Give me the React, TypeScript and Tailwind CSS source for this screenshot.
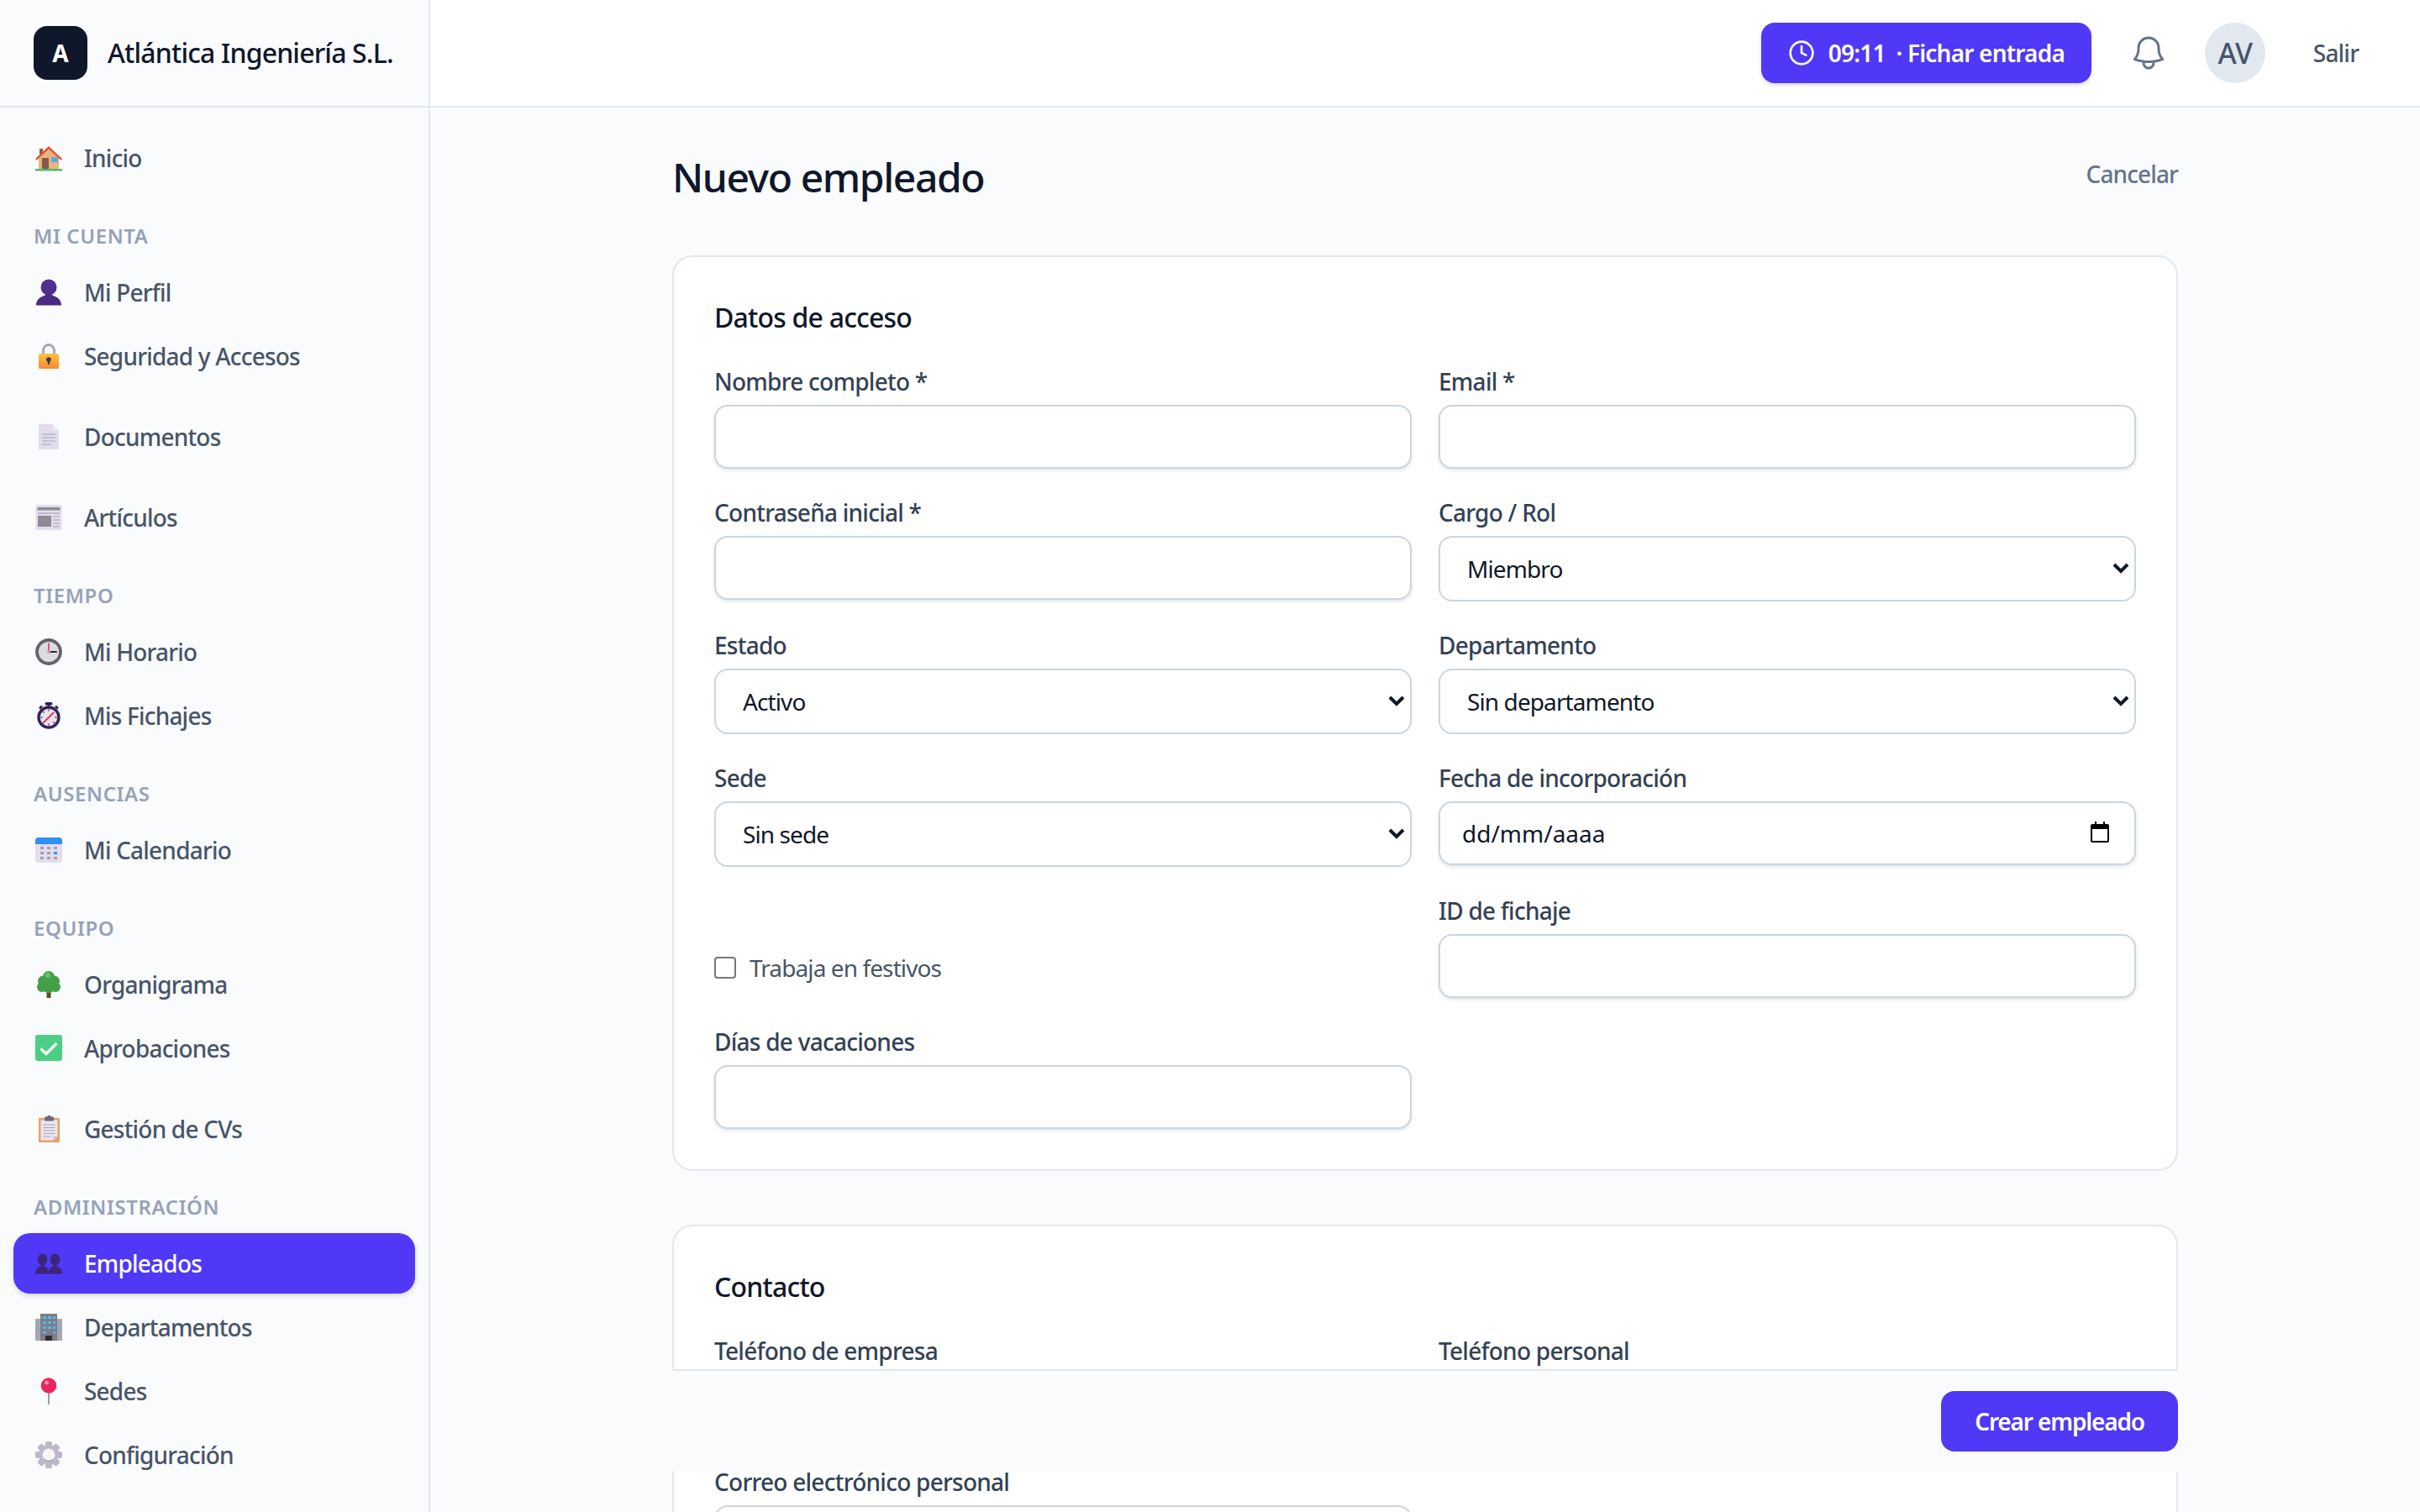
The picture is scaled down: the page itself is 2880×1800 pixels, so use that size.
import { ReactNode } from 'react';
import { Clock } from 'lucide-react';

function HomeIcon() {
  return (
    <svg viewBox="0 0 32 32" className="h-[32px] w-[32px]">
      <rect x="5" y="5" width="4" height="8" fill="#b4533a" />
      <path d="M4 15 16 4l12 11v14H4z" fill="#e9b47d" />
      <path d="M0 17 16 2l16 15-1.600 1.800L16 5.400 1.600 18.800z" fill="#e2553a" />
      <rect x="8" y="16" width="8" height="13" rx="1" fill="#85594a" />
      <rect x="19" y="15" width="8" height="6" rx="1" fill="#5aa9e6" />
      <rect x="0" y="29" width="32" height="2.500" fill="#52b96b" />
    </svg>
  );
}

function BustIcon() {
  return (
    <svg viewBox="0 0 32 32" className="h-[32px] w-[32px]">
      <ellipse cx="16" cy="10" rx="9.500" ry="9.500" fill="#4f2f8f" />
      <path d="M1 31.500c0-7 5-10 9.500-11.500l5.500-3 5.500 3c4.500 1.500 9.500 4.500 9.500 11.500z" fill="#4a2a86" />
    </svg>
  );
}

function BustsIcon() {
  return (
    <svg viewBox="0 0 32 32" className="h-[32px] w-[32px]">
      <g fill="#3d2478">
        <ellipse cx="8.500" cy="11.500" rx="5.800" ry="7" />
        <path d="M0 28.500c0-5 2.500-7.500 5-8.500l3.500-2 3.500 2c2.500 1 4 3.500 4 8.500z" />
        <ellipse cx="23.500" cy="11.500" rx="5.800" ry="7" />
        <path d="M16 28.500c0-5 1.500-7.500 4-8.500l3.500-2 3.500 2c2.500 1 5 3.500 5 8.500z" />
      </g>
    </svg>
  );
}

function LockIcon() {
  return (
    <svg viewBox="0 0 32 32" className="h-[32px] w-[32px]">
      <defs>
        <linearGradient id="lockBody" x1="0" y1="0" x2="0" y2="1">
          <stop offset="0" stopColor="#fcc23b" />
          <stop offset="1" stopColor="#f78a34" />
        </linearGradient>
      </defs>
      <path d="M9.500 15V9a6.500 6.500 0 0 1 13 0v6" fill="none" stroke="#a9a4b0" strokeWidth="2.800" />
      <rect x="4" y="13" width="24" height="18" rx="1.500" fill="url(#lockBody)" />
      <circle cx="16" cy="20" r="2.800" fill="#3f3347" />
      <rect x="14.800" y="21" width="2.400" height="5" rx="1" fill="#3f3347" />
    </svg>
  );
}

function DocumentIcon() {
  return (
    <svg viewBox="0 0 32 32" className="h-[32px] w-[32px]">
      <path d="M4 1h17l7 7v23H4z" fill="#e3dcef" />
      <path d="M21 1l7 7h-7z" fill="#f2eef8" />
      <path d="M8 13h16M8 17h16M8 21h16M8 25h11" stroke="#a9a2b6" strokeWidth="1.200" />
    </svg>
  );
}

function NewsIcon() {
  return (
    <svg viewBox="0 0 32 32" className="h-[32px] w-[32px]">
      <rect x="0.500" y="1" width="31" height="30" rx="1.500" fill="#e3dcef" />
      <rect x="2.500" y="4" width="27" height="3.500" fill="#8f8a96" />
      <path d="M3 11h26" stroke="#a9a2b6" strokeWidth="1.200" />
      <rect x="3" y="14" width="16" height="13" fill="#8f8a96" />
      <path d="M21 15h8M21 19h8M21 23h8M21 27h8" stroke="#a9a2b6" strokeWidth="1.200" />
    </svg>
  );
}

function ClockEmoji() {
  return (
    <svg viewBox="0 0 32 32" className="h-[32px] w-[32px]">
      <circle cx="16" cy="16" r="14" fill="#dfdbe3" stroke="#66636b" strokeWidth="3.800" />
      <path d="M16 16V6" stroke="#e8335b" strokeWidth="1.600" strokeLinecap="round" />
      <path d="M16 16h9" stroke="#2f2b33" strokeWidth="2.200" strokeLinecap="round" />
      <circle cx="16" cy="16" r="2" fill="#a9a4b0" />
    </svg>
  );
}

function StopwatchIcon() {
  return (
    <svg viewBox="0 0 32 32" className="h-[32px] w-[32px]">
      <rect x="11.500" y="0" width="9" height="3.500" rx="1.700" fill="#2e2150" />
      <rect x="14.500" y="3" width="3" height="3" fill="#2e2150" />
      <path d="M24 4.500l3 3" stroke="#2e2150" strokeWidth="2.500" />
      <path d="M8 4.500l-3 3" stroke="#2e2150" strokeWidth="2.500" />
      <circle cx="16" cy="18" r="12" fill="#e6e2ea" stroke="#33245a" strokeWidth="3.400" />
      <path d="M11 23 21.500 12.500" stroke="#e8335b" strokeWidth="2" strokeLinecap="round" />
      <path d="M16 8.500v2M16 25.500v2M6.500 18h2M23.500 18h2M9 11l1.500 1.500M9 25l1.500-1.500M23 25l-1.500-1.500" stroke="#4b4458" strokeWidth="1.500" />
    </svg>
  );
}

function CalendarIcon() {
  return (
    <svg viewBox="0 0 32 32" className="h-[32px] w-[32px]">
      <rect x="0" y="1" width="32" height="30" rx="4" fill="#e3dcef" />
      <path d="M0 9V5a4 4 0 0 1 4-4h24a4 4 0 0 1 4 4v4z" fill="#2f8ff2" />
      <g fill="#a49db4">
        <rect x="6" y="12" width="4" height="3" />
        <rect x="14" y="12" width="4" height="3" />
        <rect x="22" y="12" width="4" height="3" />
        <rect x="6" y="18" width="4" height="3" />
        <rect x="14" y="18" width="4" height="3" />
        <rect x="6" y="24" width="4" height="3" />
        <rect x="14" y="24" width="4" height="3" />
        <rect x="22" y="24" width="4" height="3" />
      </g>
      <rect x="22" y="18" width="4" height="3" fill="#2f8ff2" />
    </svg>
  );
}

function TreeIcon() {
  return (
    <svg viewBox="0 0 32 32" className="h-[32px] w-[32px]">
      <rect x="13.500" y="22" width="5" height="10" fill="#6d4534" />
      <g fill="#43a047">
        <circle cx="16" cy="7" r="7" />
        <circle cx="9.500" cy="12" r="6.500" />
        <circle cx="22.500" cy="12" r="6.500" />
        <circle cx="8" cy="19" r="6" />
        <circle cx="24" cy="19" r="6" />
        <circle cx="16" cy="18" r="8" />
      </g>
      <circle cx="15" cy="5" r="3.500" fill="#66bb6a" />
    </svg>
  );
}

function CheckIcon() {
  return (
    <svg viewBox="0 0 32 32" className="h-[32px] w-[32px]">
      <rect x="0" y="0" width="32" height="31" rx="3" fill="#4ccf84" />
      <path d="M6.500 16.500 13 22.500 25.500 10" fill="none" stroke="#fff" strokeWidth="3.200" />
    </svg>
  );
}

function ClipboardIcon() {
  return (
    <svg viewBox="0 0 32 32" className="h-[32px] w-[32px]">
      <rect x="4" y="3" width="25" height="29" rx="1" fill="#e6a266" />
      <path d="M6.500 5.500h20v19l-5 5h-15z" fill="#eae5f2" />
      <path d="M21.500 29.500v-5h5z" fill="#cfc8dc" />
      <rect x="11" y="1.500" width="11" height="5" rx="1" fill="#6d6a78" />
      <rect x="14" y="0" width="5" height="3" rx="1.500" fill="#6d6a78" />
      <path d="M9.500 11h14M9.500 14.500h14M9.500 18h14M9.500 21.500h14M9.500 25h9" stroke="#aaa3b8" strokeWidth="1.200" />
    </svg>
  );
}

function OfficeIcon() {
  return (
    <svg viewBox="0 0 32 32" className="h-[32px] w-[32px]">
      <rect x="0" y="6" width="32" height="26" fill="#a9a6ae" />
      <rect x="6" y="0" width="20" height="32" fill="#7f7c86" />
      <g fill="#4fb8ee">
        <rect x="9" y="3" width="4" height="3" />
        <rect x="15" y="3" width="4" height="3" />
        <rect x="21" y="3" width="3" height="3" />
        <rect x="9" y="9" width="4" height="3" />
        <rect x="15" y="9" width="4" height="3" />
        <rect x="21" y="9" width="3" height="3" />
        <rect x="9" y="15" width="4" height="3" />
        <rect x="15" y="15" width="4" height="3" />
        <rect x="21" y="15" width="3" height="3" />
        <rect x="9" y="21" width="4" height="3" />
        <rect x="21" y="21" width="3" height="3" />
        <rect x="2" y="10" width="2" height="3" />
        <rect x="2" y="16" width="2" height="3" />
        <rect x="28" y="10" width="2" height="3" />
        <rect x="28" y="16" width="2" height="3" />
      </g>
      <rect x="12" y="26" width="8" height="6" fill="#2f2b33" />
    </svg>
  );
}

function PinIcon() {
  return (
    <svg viewBox="0 0 32 32" className="h-[32px] w-[32px]">
      <rect x="15" y="16" width="2" height="16" fill="#a09ca6" />
      <circle cx="16" cy="9.500" r="9.300" fill="#e9265f" />
      <circle cx="13.500" cy="6" r="2.500" fill="#f98aa9" />
    </svg>
  );
}

function GearIcon() {
  return (
    <svg viewBox="0 0 32 32" className="h-[32px] w-[32px]">
      <g fill="#bdb7c9">
        <circle cx="16" cy="16" r="11.500" />
        <rect x="12" y="0" width="8" height="32" rx="2.500" />
        <rect x="12" y="0" width="8" height="32" rx="2.500" transform="rotate(45 16 16)" />
        <rect x="12" y="0" width="8" height="32" rx="2.500" transform="rotate(90 16 16)" />
        <rect x="12" y="0" width="8" height="32" rx="2.500" transform="rotate(135 16 16)" />
      </g>
      <circle cx="16" cy="16" r="7.500" fill="#f8f6fb" />
      <path d="M9.500 20a7.500 7.500 0 0 0 13 0 9 9 0 0 1-13 0z" fill="#8f8a96" />
    </svg>
  );
}

function BellIcon() {
  return (
    <svg viewBox="0 0 24 24" fill="none" stroke="currentColor" strokeWidth="1.500" className="h-[48px] w-[48px] text-[#64748b]">
      <path
        strokeLinecap="round"
        strokeLinejoin="round"
        d="M14.857 17.082a23.848 23.848 0 0 0 5.454-1.31A8.967 8.967 0 0 1 18 9.750V9A6 6 0 0 0 6 9v.750a8.967 8.967 0 0 1-2.312 6.022c1.733.64 3.560 1.085 5.455 1.310m5.714 0a24.255 24.255 0 0 1-5.714 0m5.714 0a3 3 0 1 1-5.714 0"
      />
    </svg>
  );
}

function NavItem({ icon, label, active = false }: { icon: ReactNode; label: string; active?: boolean }) {
  return (
    <a
      className={
        active
          ? 'flex h-[72px] items-center gap-[24px] rounded-[20px] bg-[#4f39f6] px-[24px] text-[28px] font-medium tracking-[-0.8px] text-white shadow-[0_2px_6px_rgba(15,23,42,0.18)]'
          : 'flex h-[72px] items-center gap-[24px] rounded-[20px] px-[24px] text-[28px] font-medium tracking-[-0.8px] text-[#475569]'
      }
    >
      <span className="flex w-[36px] justify-center">{icon}</span>
      {label}
    </a>
  );
}

function NavGroup({ title, children }: { title?: string; children: ReactNode }) {
  return (
    <div className="flex flex-col gap-[4px]">
      {title && (
        <div className="mb-[11px] flex h-[49px] items-end px-[24px] text-[24px] leading-[32px] font-semibold tracking-[0.6px] text-[#94a3b8] uppercase">
          {title}
        </div>
      )}
      {children}
    </div>
  );
}

function Field({ label, children }: { label: string; children: ReactNode }) {
  return (
    <div className="flex flex-col gap-[8px]">
      <label className="text-[28px] leading-[40px] font-medium tracking-[-0.75px] text-[#334155]">{label}</label>
      {children}
    </div>
  );
}

function TextInput() {
  return (
    <input className="h-[76px] w-full rounded-[16px] border-2 border-[#cbd5e1] bg-white px-[28px] text-[28px] text-[#0f172a] shadow-[0_2px_4px_rgba(15,23,42,0.12)]" />
  );
}

function SelectInput({ options }: { options: string[] }) {
  return (
    <div className="relative">
      <select className="h-[78px] w-full appearance-none rounded-[16px] border-2 border-[#cbd5e1] bg-white pr-[60px] pl-[32px] text-[28px] tracking-[-0.9px] text-[#0f172a]">
        {options.map((o) => (
          <option key={o}>{o}</option>
        ))}
      </select>
      <svg viewBox="0 0 20 13" className="pointer-events-none absolute top-[32px] right-[8px] h-[13px] w-[20px]" fill="none" stroke="#0f172a" strokeWidth="4">
        <path d="M2 2l8 8 8-8" />
      </svg>
    </div>
  );
}

function DateInput() {
  return (
    <div className="relative">
      <input
        type="text"
        defaultValue="dd/mm/aaaa"
        className="h-[76px] w-full rounded-[16px] border-2 border-[#cbd5e1] bg-white pr-[70px] pl-[26px] text-[28px] text-[#0f172a] shadow-[0_2px_4px_rgba(15,23,42,0.12)]"
      />
      <svg viewBox="0 0 24 26" className="pointer-events-none absolute top-[24px] right-[31px] h-[26px] w-[24px]">
        <path d="M6 0h2v3h8V0h2v3h3a2 2 0 0 1 2 2v18a2 2 0 0 1-2 2H3a2 2 0 0 1-2-2V5a2 2 0 0 1 2-2h3zM3 9v14h18V9z" fill="#000" />
      </svg>
    </div>
  );
}

function Card({ title, children }: { title: string; children: ReactNode }) {
  return (
    <section className="rounded-[24px] border-2 border-[#e2e8f0] bg-white p-[48px]">
      <h2 className="mb-[32px] text-[32px] leading-[48px] font-medium tracking-[-0.8px] text-[#0f172a]">{title}</h2>
      {children}
    </section>
  );
}

export default function App() {
  return (
    <div className="flex h-screen overflow-hidden bg-[#fafbfd] font-['Noto_Sans',sans-serif]">
      <aside className="flex w-[512px] shrink-0 flex-col border-r-2 border-[#e2e8f0] bg-[#fafbfd]">
        <div className="flex h-[128px] shrink-0 items-center gap-[24px] border-b-2 border-[#e2e8f0] pl-[40px]">
          <div className="flex h-[64px] w-[64px] items-center justify-center rounded-[16px] bg-[#0f172a] text-[28px] font-bold text-white">
            A
          </div>
          <span className="text-[32px] font-medium tracking-[-0.85px] whitespace-nowrap text-[#0f172a]">Atlántica Ingeniería S.L.</span>
        </div>
        <nav className="flex flex-col gap-[24px] px-[16px] pt-[24px]">
          <NavGroup>
            <NavItem icon={<HomeIcon />} label="Inicio" />
          </NavGroup>
          <NavGroup title="Mi cuenta">
            <NavItem icon={<BustIcon />} label="Mi Perfil" />
            <NavItem icon={<LockIcon />} label="Seguridad y Accesos" />
          </NavGroup>
          <NavGroup>
            <NavItem icon={<DocumentIcon />} label="Documentos" />
          </NavGroup>
          <NavGroup>
            <NavItem icon={<NewsIcon />} label="Artículos" />
          </NavGroup>
          <NavGroup title="Tiempo">
            <NavItem icon={<ClockEmoji />} label="Mi Horario" />
            <NavItem icon={<StopwatchIcon />} label="Mis Fichajes" />
          </NavGroup>
          <NavGroup title="Ausencias">
            <NavItem icon={<CalendarIcon />} label="Mi Calendario" />
          </NavGroup>
          <NavGroup title="Equipo">
            <NavItem icon={<TreeIcon />} label="Organigrama" />
            <NavItem icon={<CheckIcon />} label="Aprobaciones" />
          </NavGroup>
          <NavGroup>
            <NavItem icon={<ClipboardIcon />} label="Gestión de CVs" />
          </NavGroup>
          <NavGroup title="Administración">
            <NavItem icon={<BustsIcon />} label="Empleados" active />
            <NavItem icon={<OfficeIcon />} label="Departamentos" />
            <NavItem icon={<PinIcon />} label="Sedes" />
            <NavItem icon={<GearIcon />} label="Configuración" />
          </NavGroup>
        </nav>
      </aside>

      <div className="flex min-w-0 flex-1 flex-col">
        <header className="flex h-[128px] shrink-0 items-center justify-end border-b-2 border-[#e2e8f0] bg-white pr-[72px]">
          <button className="flex h-[72px] items-center gap-[16px] rounded-[16px] bg-[#4f39f6] px-[32px] text-[28px] font-semibold tracking-[-0.8px] text-white shadow-[0_2px_4px_rgba(15,23,42,0.18)]">
            <Clock className="h-[32px] w-[32px]" />
            <span className="whitespace-pre">09:11  · Fichar entrada</span>
          </button>
          <span className="mr-[43px] ml-[44px]">
            <BellIcon />
          </span>
          <div className="flex h-[72px] w-[72px] items-center justify-center rounded-full bg-[#e2e8f0] text-[34px] font-medium tracking-[-0.5px] text-[#475569]">
            AV
          </div>
          <button className="ml-[56px] w-[56px] text-[28px] font-medium tracking-[-0.8px] whitespace-nowrap text-[#475569]">Salir</button>
        </header>

        <main className="min-h-0 flex-1 overflow-hidden">
          <div className="mx-auto w-[1792px] pt-[48px] pb-[48px]">
            <div className="mb-[56px] flex h-[72px] items-center justify-between">
              <h1 className="mb-[2px] text-[48px] font-medium tracking-[-1.4px] text-[#0f172a]">Nuevo empleado</h1>
              <a className="mb-[10px] text-[28px] font-medium tracking-[-0.9px] text-[#64748b]">Cancelar</a>
            </div>

            <div className="flex flex-col gap-[64px]">
              <Card title="Datos de acceso">
                <div className="grid grid-cols-2 gap-x-[32px] gap-y-[32px]">
                  <Field label="Nombre completo *">
                    <TextInput />
                  </Field>
                  <Field label="Email *">
                    <TextInput />
                  </Field>
                  <Field label="Contraseña inicial *">
                    <TextInput />
                  </Field>
                  <Field label="Cargo / Rol">
                    <SelectInput options={['Miembro']} />
                  </Field>
                  <Field label="Estado">
                    <SelectInput options={['Activo']} />
                  </Field>
                  <Field label="Departamento">
                    <SelectInput options={['Sin departamento']} />
                  </Field>
                  <Field label="Sede">
                    <SelectInput options={['Sin sede']} />
                  </Field>
                  <Field label="Fecha de incorporación">
                    <DateInput />
                  </Field>
                  <label className="flex items-end gap-[16px] pb-[16px] text-[28px] leading-[40px] tracking-[-0.9px] text-[#475569]">
                    <span className="mb-[7px] h-[26px] w-[26px] rounded-[4px] border-2 border-[#767676] bg-white" />
                    Trabaja en festivos
                  </label>
                  <Field label="ID de fichaje">
                    <TextInput />
                  </Field>
                  <Field label="Días de vacaciones">
                    <TextInput />
                  </Field>
                </div>
              </Card>

              <Card title="Contacto">
                <div className="grid grid-cols-2 gap-x-[32px] gap-y-[32px]">
                  <Field label="Teléfono de empresa">
                    <TextInput />
                  </Field>
                  <Field label="Teléfono personal">
                    <TextInput />
                  </Field>
                  <Field label="Correo electrónico personal">
                    <TextInput />
                  </Field>
                </div>
              </Card>
            </div>

            <div className="sticky bottom-[48px] z-10 flex justify-end border-t-2 border-[#e2e8f0] bg-[#fafbfd]/95 py-[24px] backdrop-blur-sm">
              <button className="h-[72px] rounded-[16px] bg-[#4f39f6] px-[40px] text-[28px] font-semibold tracking-[-1.15px] text-white">
                Crear empleado
              </button>
            </div>
          </div>
        </main>
      </div>
    </div>
  );
}
